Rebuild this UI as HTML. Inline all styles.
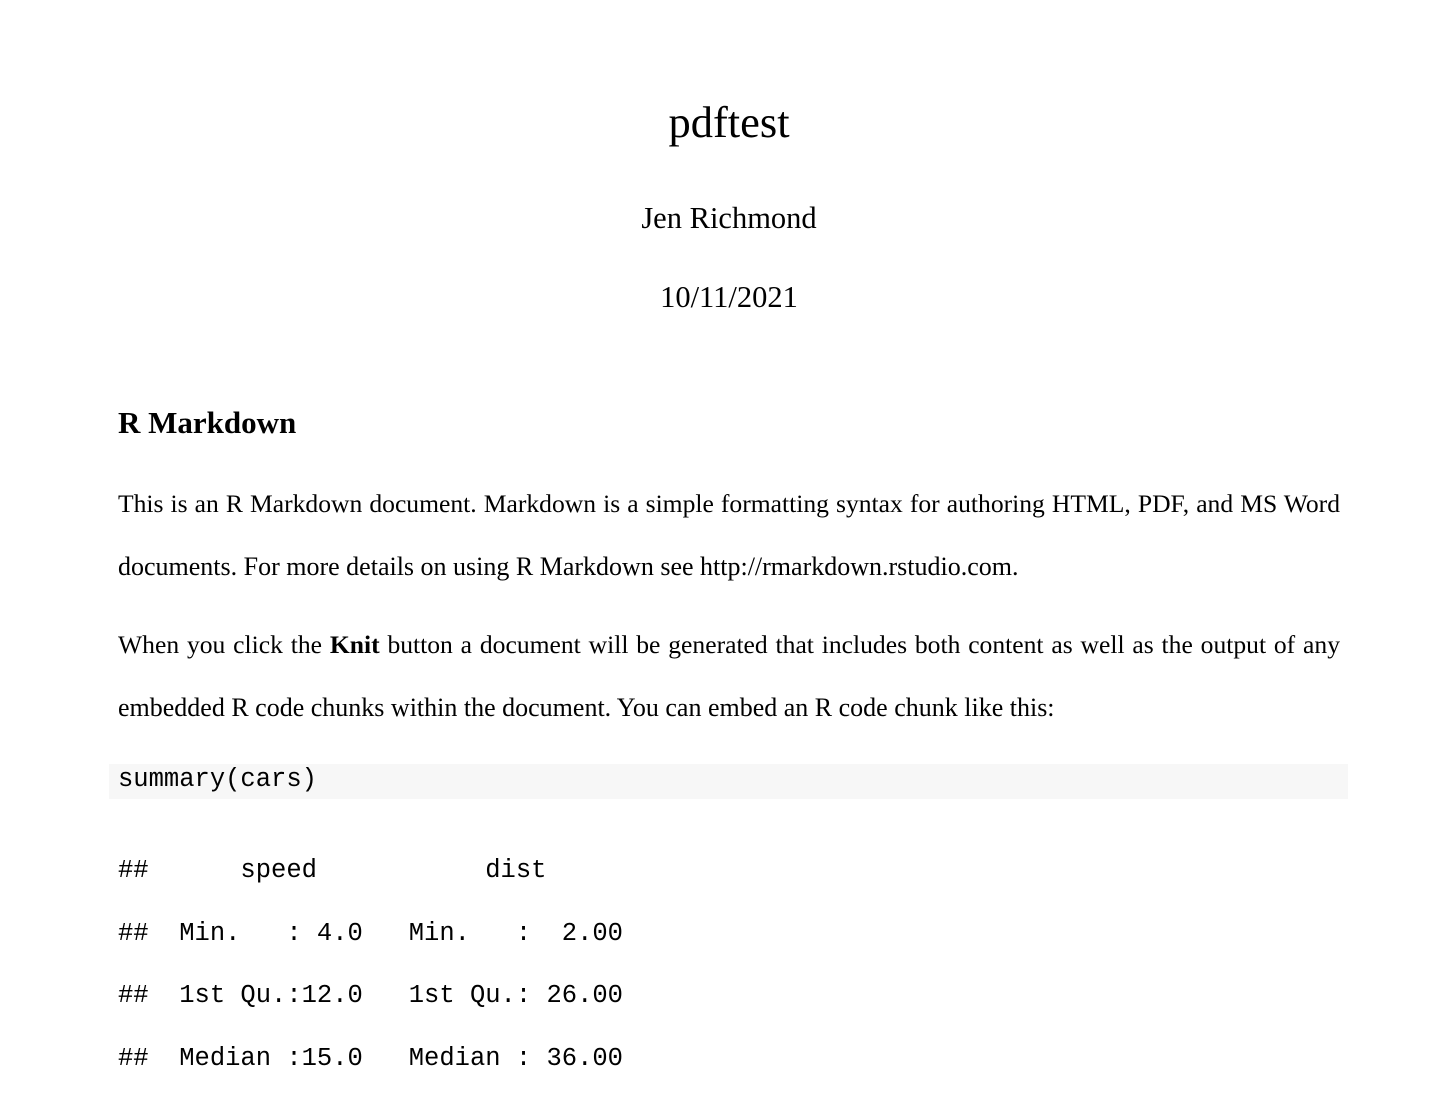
<!DOCTYPE html>
<html><head><meta charset="utf-8"><style>
body{margin:0;background:#fff;width:1441px;height:1099px;overflow:hidden;position:relative;font-family:"Liberation Serif",serif;color:#000}
.a{position:absolute;white-space:pre;line-height:1}
.c{left:0;width:1458px;text-align:center}
.j{left:118px;width:1222px;text-align:justify;text-align-last:justify;font-size:25.6px;white-space:normal}
.m{font-family:"Liberation Mono",monospace;font-size:25.5px;left:118px}
</style></head><body>
<div class="a c" style="top:100px;font-size:44.5px">pdftest</div>
<div class="a c" style="top:203px;font-size:30.5px">Jen Richmond</div>
<div class="a c" style="top:282px;font-size:30.5px">10/11/2021</div>
<div class="a" style="left:118px;top:407px;font-size:31px;font-weight:bold">R Markdown</div>
<div class="a j" style="top:491px">This is an R Markdown document. Markdown is a simple formatting syntax for authoring HTML, PDF, and MS Word</div>
<div class="a" style="left:118px;top:554px;font-size:26px">documents. For more details on using R Markdown see http://rmarkdown.rstudio.com.</div>
<div class="a j" style="top:632px">When you click the <b>Knit</b> button a document will be generated that includes both content as well as the output of any</div>
<div class="a" style="left:118px;top:695px;font-size:26px">embedded R code chunks within the document. You can embed an R code chunk like this:</div>
<div style="position:absolute;left:109px;top:764px;width:1239px;height:35px;background:#f7f7f7"></div>
<div class="a m" style="top:767px">summary(cars)</div>
<div class="a m" style="top:858px">##      speed           dist    </div>
<div class="a m" style="top:921px">##  Min.   : 4.0   Min.   :  2.00</div>
<div class="a m" style="top:983px">##  1st Qu.:12.0   1st Qu.: 26.00</div>
<div class="a m" style="top:1046px">##  Median :15.0   Median : 36.00</div>
</body></html>
